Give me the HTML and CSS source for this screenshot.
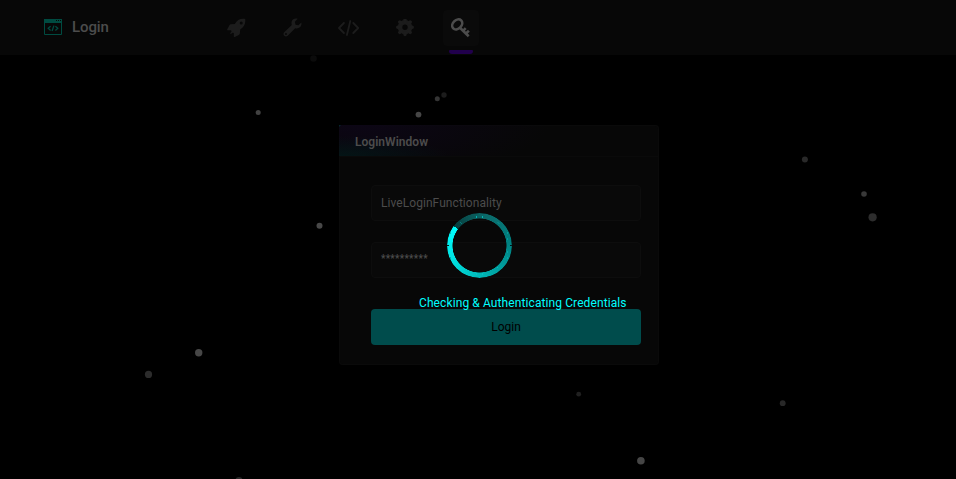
FILE: index.html
```html
<!DOCTYPE html>
<html lang="en">
<head>
<meta charset="utf-8">
<title>Login</title>
<link rel="stylesheet" href="styles.css">
</head>
<body>
<svg class="particles" width="956" height="479" aria-hidden="true">
  <circle cx="313.5" cy="58.5" r="3.3" fill="#0b0b0b"/>
  <circle cx="258.2" cy="112.6" r="2.5" fill="#424242"/>
  <circle cx="444" cy="95" r="2.7" fill="#1c1c1c"/>
  <circle cx="437.3" cy="98.8" r="2.5" fill="#353535"/>
  <circle cx="418.5" cy="114.6" r="2.9" fill="#464646"/>
  <circle cx="319.5" cy="225.8" r="3" fill="#484848"/>
  <circle cx="804.9" cy="159.5" r="3" fill="#292929"/>
  <circle cx="864" cy="194" r="2.8" fill="#393939"/>
  <circle cx="872.6" cy="217.3" r="4.1" fill="#2d2d2d"/>
  <circle cx="198.7" cy="352.8" r="3.7" fill="#474747"/>
  <circle cx="148.5" cy="374.4" r="3.6" fill="#2c2c2c"/>
  <circle cx="578.7" cy="394.2" r="2.4" fill="#202020"/>
  <circle cx="782.7" cy="403.2" r="2.9" fill="#282828"/>
  <circle cx="640.9" cy="460.7" r="3.8" fill="#464646"/>
  <circle cx="239" cy="480.5" r="3.6" fill="#292929"/>
</svg>
<header class="topbar">
  <div class="brand">
    <svg class="brand-icon" width="18" height="16" viewBox="0 0 18 16">
      <path d="M.5.5h17v15H.5z" fill="none" stroke="#004b41"/>
      <path d="M0 0h18v4H0z" fill="#004b41"/>
      <path d="M12 1h1v1h-1zM14 1h1v1h-1zM16 1h1v1h-1z" fill="#070707"/>
      <path d="M6.600 7.200 4.200 9.300l2.400 2.100M11.400 7.200l2.400 2.100-2.400 2.100M9.900 6.600 8.100 12" fill="none" stroke="#004b41" stroke-width="1.300"/>
    </svg>
    <span class="brand-name">Login</span>
  </div>
  <nav class="nav">
    <a class="nav-item">
      <svg width="20" height="20" viewBox="0 0 20 20"><path transform="translate(-.8 -.2)" fill="#1c1c1c" fill-rule="evenodd" d="M19 1.200c-5-.7-8.100 1.100-10.400 4.900L4.700 6.400c-.7.100-1.200.4-1.500 1L1 11.600c-.3.600.1.900.6.900h3.300l.4 1.400-1.500 1.500.9.900 1.500-1.400 1.400.4v3.300c0 .5.400.9 1 .6l4-2.100c.7-.4 1-.9 1.100-1.600l.3-3.800c3.800-2.300 5.600-5.500 5-10.500zM15 3.800a1.500 1.500 0 1 1 0 3 1.500 1.500 0 0 1 0-3z"/></svg>
    </a>
    <a class="nav-item">
      <svg width="20" height="20" viewBox="0 0 20 20"><path transform="translate(-.5 -.8)" fill="#1c1c1c" fill-rule="evenodd" d="M18.800 5.300 15.900 8.100 13 7.600l-.6-3L15.200 1.600C12.700.6 9.900 1.700 9.200 4.200c-.4 1.300-.2 2.500.1 3.500L1.700 15.100c-1 1-1 2.400 0 3.400s2.500 1 3.500 0l7.500-7.500c3.600 1.200 7.100-1.700 6.100-5.700zM3.500 15.900a1 1 0 1 1 0 2 1 1 0 0 1 0-2z"/></svg>
    </a>
    <a class="nav-item">
      <svg width="22" height="18" viewBox="0 0 22 18"><path transform="translate(-.4 0)" fill="none" stroke="#1c1c1c" stroke-width="1.800" stroke-linecap="round" stroke-linejoin="round" d="M6.300 4 1.400 9l4.900 5M15.700 4l4.900 5-4.900 5M12.700 2 9.300 16"/></svg>
    </a>
    <a class="nav-item">
      <svg width="18" height="18" viewBox="0 0 18 18"><g transform="translate(0 -.8)"><circle cx="9" cy="9" r="5" fill="none" stroke="#1c1c1c" stroke-width="4.600"/><path d="M9 1.700v2M9 14.300v2M1.700 9h2M14.300 9h2M3.800 3.800l1.400 1.400M12.800 12.800l1.400 1.400M14.200 3.800l-1.400 1.400M5.200 12.800l-1.400 1.400" stroke="#1c1c1c" stroke-width="3.400" stroke-linecap="round"/></g></svg>
    </a>
    <a class="nav-item active">
      <svg width="20" height="20" viewBox="0 0 20 20"><g transform="translate(-.7 -.5)" fill="none" stroke="#4c4c4c" stroke-width="2.600"><ellipse cx="6.900" cy="6.900" rx="5.600" ry="4.300" transform="rotate(-45 6.900 6.900)"/><path d="m9.400 10 9 8.700M12.800 13.300l2.600-2.700M15.700 15.900l2.900-2.700"/></g></svg>
    </a>
  </nav>
</header>
<main class="stage">
  <section class="window">
    <h1 class="window-title"><span>LoginWindow</span></h1>
    <form class="form">
      <div class="field"><span class="user">LiveLoginFunctionality</span></div>
      <div class="field second"><span class="secret">**********</span></div>
      <button class="submit" type="button"><span>Login</span></button>
    </form>
    <div class="loader">
      <svg class="ticks" width="65" height="65" viewBox="0 0 65 65">
        <path d="M0 32.500h2M63 32.500h2" stroke="#031717"/>
        <path d="M29.500 3v2M35.500 3v2M29.500 60v2M35.500 60v2M13.500 9.500l1 1M51 9.500l1 1M13.500 55l1-1M51 55l-1-1M60 20h1M60 26h1M60 39h1M60 45h1" stroke="#00c9c9" stroke-width=".8"/>
        <path d="M3 20h1M3 45h1" stroke="#007e7e"/>
      </svg>
    </div>
    <p class="status">Checking &amp; Authenticating Credentials</p>
  </section>
</main>
</body>
</html>
```
FILE: styles.css
```css
* { box-sizing: border-box; }
body {
  margin: 0;
  height: 479px;
  overflow: hidden;
  background: #000;
  color: #4c4c4c;
  font-family: Roboto, "Liberation Sans", sans-serif;
  font-size: 12px;
}
.particles { position: absolute; top: 0; left: 0; filter: blur(.5px); }
.topbar {
  position: relative;
  display: flex;
  height: 55px;
  padding-left: 44px;
  background: #070707;
}
.brand { display: flex; align-items: center; gap: 10px; width: 175px; height: 54px; }
.brand-name { font-size: 15px; font-weight: 500; letter-spacing: -.1px; }
.nav { display: flex; gap: 20px; padding-top: 10px; }
.nav-item {
  position: relative;
  display: flex;
  align-items: center;
  justify-content: center;
  width: 36px;
  height: 36px;
  border-radius: 4px;
}
.nav-item.active { background: #0a0a0a; }
.nav-item.active::after {
  content: "";
  position: absolute;
  top: 40px;
  left: 6px;
  width: 24px;
  height: 4px;
  border-radius: 1px 1px 3px 3px;
  background: #21004c;
}
.stage { position: relative; display: flex; padding: 70px 0 0 339px; }
.window {
  position: relative;
  width: 320px;
  height: 240px;
  background: #070707;
  border-radius: 4px;
  box-shadow: inset 0 0 0 1px #0a0a0a;
}
.window-title {
  display: flex;
  align-items: center;
  height: 32px;
  margin: 0;
  padding: 3px 16px 0;
  border-bottom: 1px solid #0a0a0a;
  border-radius: 1px 4px 0 0;
  background:
    radial-gradient(circle at 0 0, #004c4c 0, transparent 2px),
    radial-gradient(ellipse 110px 20px at 0 100%, rgba(0, 30, 28, .6), transparent),
    radial-gradient(ellipse 190px 52px at 20px 0, #0c0615, transparent);
  font-size: 12px;
  font-weight: 600;
  letter-spacing: .03px;
}
.form { display: flex; flex-direction: column; padding: 28px 18px 0 32px; }
.field {
  display: flex;
  align-items: center;
  height: 36px;
  padding: 0 9px;
  border: 1px solid #0d0d0d;
  border-radius: 4px;
  background: #090909;
}
.user { letter-spacing: .06px; }
.second { margin-top: 21px; }
.secret { font-size: 10px; font-weight: 500; letter-spacing: .25px; padding-bottom: 3px; }
.submit {
  height: 36px;
  margin-top: 31px;
  padding: 0;
  border: 0;
  border-radius: 4px;
  background: #004c4c;
  color: #000;
  font: 12px Roboto, "Liberation Sans", sans-serif;
}
.loader {
  position: absolute;
  top: 88px;
  left: 108px;
  width: 65px;
  height: 65px;
}
.loader::before {
  content: "";
  position: absolute;
  inset: 0;
  border-radius: 50%;
  background: conic-gradient(from 307deg, #063e3e, #0b6969 18%, #008080 38%, #00adad 60%, #00dede 80%, #0ff);
  -webkit-mask: radial-gradient(circle, transparent 26.7px, #000 27.3px);
  mask: radial-gradient(circle, transparent 26.7px, #000 27.3px);
}
.ticks { position: absolute; inset: 0; }
.status {
  position: absolute;
  top: 170px;
  left: 80px;
  margin: 0;
  line-height: 16px;
  letter-spacing: .1px;
  color: #0ff;
  white-space: nowrap;
}
```
